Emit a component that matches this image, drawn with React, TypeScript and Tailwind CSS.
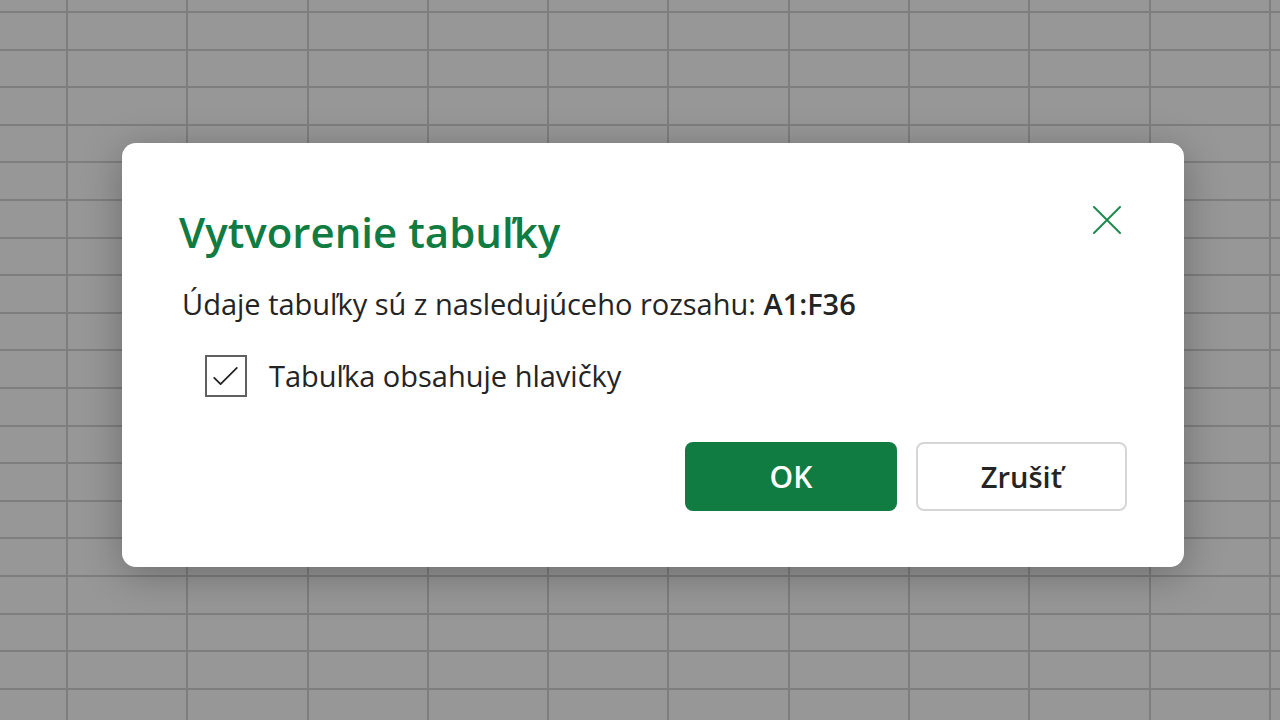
import React from "react"

const COLS = 12
const ROWS = 20

// dimmed sheet behind the modal
function SheetBackdrop() {
    const cells = []
    for (let r = 0; r < ROWS; r++) {
        for (let c = 0; c < COLS; c++) {
            cells.push(<div key={r + "-" + c} className="bg-[#979797]"></div>)
        }
    }
    return (
        <div className="h-full w-full overflow-hidden bg-[#7e7e7e]">
            <div className="grid grid-cols-[66px_repeat(10,118.3px)_1fr] grid-rows-[11px_repeat(19,35.6px)] gap-[2px]">
                {cells}
            </div>
        </div>
    )
}

function CreateTableDialog() {
    return (
        <div className="absolute left-[122px] top-[143px] w-[1062px] h-[424px] bg-white rounded-[14px] shadow-[0_8px_40px_rgba(0,0,0,0.28)] px-[57px] pt-[65px] pb-[56px] flex flex-col" style={{ fontFamily: '"Open Sans", "Noto Sans", sans-serif' }}>
            <div className="flex items-start justify-between">
                <h1 className="text-[42px] leading-[48px] font-semibold text-[#107c41]">Vytvorenie tabuľky</h1>
                <button className="w-[40px] h-[40px] -mt-[8px] flex items-center justify-center">
                    <svg width="28" height="28" viewBox="0 0 28 28" fill="none">
                        <path d="M1 1 L27 27 M27 1 L1 27" stroke="#1f8a50" strokeWidth="2" strokeLinecap="round" />
                    </svg>
                </button>
            </div>
            <p className="mt-[30px] text-[29px] leading-[36px] text-[#242424] pl-[3px]">
                Údaje tabuľky sú z nasledujúceho rozsahu: <b className="font-semibold">A1:F36</b>
            </p>
            <label className="mt-[33px] flex items-center gap-[22px] pl-[26px]">
                <span className="w-[42px] h-[42px] border-2 border-[#616161] flex items-center justify-center">
                    <svg width="42" height="42" viewBox="0 0 42 42" fill="none">
                        <path d="M8 23 L15 30 L33 12" stroke="#242424" strokeWidth="2" strokeLinecap="round" strokeLinejoin="round" />
                    </svg>
                </span>
                <span className="text-[29px] leading-[36px] text-[#242424]">Tabuľka obsahuje hlavičky</span>
            </label>
            <div className="mt-[45px] flex justify-end gap-[19px]">
                <button className="w-[212px] h-[69px] rounded-[8px] bg-[#107c41] text-white text-[30px] font-semibold">OK</button>
                <button className="w-[211px] h-[69px] rounded-[8px] bg-white border-2 border-[#d6d6d6] text-[#242424] text-[29px] font-semibold">Zrušiť</button>
            </div>
        </div>
    )
}

export default function App() {
    return (
        <div className="relative w-[1280px] h-[720px] overflow-hidden">
            <SheetBackdrop />
            <CreateTableDialog />
        </div>
    )
}
